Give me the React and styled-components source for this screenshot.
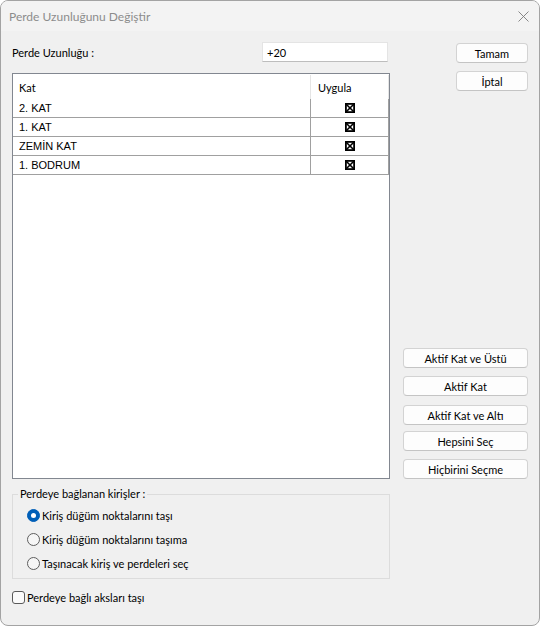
import React from 'react';
import styled, { createGlobalStyle } from 'styled-components';

const GlobalStyle = createGlobalStyle`
	html, body {
		margin: 0;
		padding: 0;
		background: #ffffff;
	}
	body {
		font-family: Lato, "Noto Sans", sans-serif;
		font-size: 11px;
		color: #000;
	}
`;

const Window = styled.div`
	width: 540px;
	height: 626px;
	box-sizing: border-box;
	border: 1px solid #a3a3a3;
	border-radius: 8px;
	overflow: hidden;
	background: #f0f0f0;
	display: flex;
	flex-direction: column;
`;

const TitleBar = styled.div`
	height: 30px;
	flex: none;
	background: #f3f3f3;
	display: flex;
	align-items: center;
	justify-content: space-between;
	padding: 0 10px 0 8px;
`;

const Title = styled.span`
	color: #8c8c8c;
	font-size: 12px;
`;

const Body = styled.div`
	padding: 11px 11px 0 11px;
	display: grid;
	grid-template-columns: 378px 125px;
	column-gap: 13px;
	align-items: stretch;
`;

const LeftCol = styled.div`
	display: flex;
	flex-direction: column;
`;

const RightCol = styled.div`
	display: flex;
	flex-direction: column;
`;

const FieldRow = styled.div`
	height: 20px;
	display: flex;
	align-items: center;
`;

const TextBox = styled.div`
	margin-left: auto;
	margin-right: 2px;
	width: 126px;
	height: 20px;
	box-sizing: border-box;
	background: #fff;
	border: 1px solid #e4e4e4;
	border-bottom-color: #bdbdbd;
	padding-left: 4px;
	display: flex;
	align-items: center;
`;

const Button = styled.div`
	width: ${props => props.narrow ? '72px' : '100%'};
	align-self: flex-end;
	height: 20px;
	box-sizing: border-box;
	margin-top: ${props => props.gap || '0'};
	background: #fdfdfd;
	border: 1px solid #d3d3d3;
	border-bottom-color: #c4c4c4;
	border-radius: 4px;
	display: flex;
	align-items: center;
	justify-content: center;
	line-height: 1;
`;

const Spacer = styled.div`
	flex: 1;
`;

const Grid = styled.div`
	margin-top: 11px;
	height: 406px;
	box-sizing: border-box;
	border: 1px solid #828790;
	background: #fff;
`;

const HeaderRow = styled.div`
	display: grid;
	grid-template-columns: 298px 78px;
	height: 25px;
`;

const HeaderCell = styled.div`
	display: flex;
	align-items: center;
	padding-left: ${props => props.pad || '6px'};
	border-right: 1px solid #e5e5e5;
	margin-top: 1px;
`;

const Row = styled.div`
	display: grid;
	grid-template-columns: 298px 78px;
	height: 19px;
	box-sizing: border-box;
	border-bottom: 1px solid #a0a0a0;
`;

const Cell = styled.div`
	display: flex;
	align-items: center;
	justify-content: ${props => props.center ? 'center' : 'flex-start'};
	padding-left: ${props => props.center ? '0' : '6px'};
	border-right: 1px solid #a0a0a0;
	font-family: "Liberation Sans", Arial, sans-serif;
	font-size: 11px;
`;

const Group = styled.fieldset`
	grid-column: 1;
	margin: 7px 0 0 0;
	padding: 0;
	border: 1px solid #dcdcdc;
	min-width: 0;
`;

const Legend = styled.legend`
	margin-left: 5px;
	padding: 0 2px;
	line-height: 16px;
`;

const OptionList = styled.div`
	display: flex;
	flex-direction: column;
	padding: 1px 0 3px 14px;
`;

const Option = styled.div`
	height: 24px;
	display: flex;
	align-items: center;
	gap: 2px;
`;

const RadioMark = styled.span`
	width: 13px;
	height: 13px;
	box-sizing: border-box;
	border-radius: 50%;
	flex: none;
	display: flex;
	align-items: center;
	justify-content: center;
	background: ${props => props.checked ? '#005fb8' : '#f6f6f6'};
	border: 1px solid ${props => props.checked ? '#005fb8' : '#5e5e5e'};

	&::after {
		content: '';
		display: ${props => props.checked ? 'block' : 'none'};
		width: 5px;
		height: 5px;
		border-radius: 50%;
		background: #fff;
	}
`;

const CheckRow = styled.div`
	grid-column: 1;
	margin-top: 10px;
	height: 16px;
	display: flex;
	align-items: center;
	gap: 2px;
`;

const CheckMark = styled.span`
	width: 13px;
	height: 13px;
	box-sizing: border-box;
	flex: none;
	border: 1px solid #5a5a5a;
	border-radius: 3px;
	background: #fbfbfb;
`;

const CloseIcon = () => (
	<svg width="11" height="11" viewBox="0 0 11 11">
		<path d="M0.5 0.5 L10.5 10.5 M10.5 0.5 L0.5 10.5" stroke="#7a7a7a" strokeWidth="0.9" fill="none" />
	</svg>
);

const CrossBox = () => (
	<svg width="10" height="10" viewBox="0 0 10 10">
		<rect x="0.9" y="0.9" width="8.2" height="8.2" stroke="#000" strokeWidth="1.8" fill="none" />
		<path d="M1.2 1.2 L8.8 8.8 M8.8 1.2 L1.2 8.8" stroke="#000" strokeWidth="1.6" />
	</svg>
);

const floors = ['2. KAT', '1. KAT', 'ZEMİN KAT', '1. BODRUM'];

const options = [
	{label: 'Kiriş düğüm noktalarını taşı', checked: true},
	{label: 'Kiriş düğüm noktalarını taşıma', checked: false},
	{label: 'Taşınacak kiriş ve perdeleri seç', checked: false}
];

export default function App() {
	return (
		<>
			<GlobalStyle />
			<Window>
				<TitleBar>
					<Title>Perde Uzunluğunu Değiştir</Title>
					<CloseIcon />
				</TitleBar>
				<Body>
					<LeftCol>
						<FieldRow>
							<span>Perde Uzunluğu :</span>
							<TextBox>+20</TextBox>
						</FieldRow>
						<Grid>
							<HeaderRow>
								<HeaderCell>Kat</HeaderCell>
								<HeaderCell pad="7px">Uygula</HeaderCell>
							</HeaderRow>
							{floors.map(floor => (
								<Row key={floor}>
									<Cell>{floor}</Cell>
									<Cell center><CrossBox /></Cell>
								</Row>
							))}
						</Grid>
					</LeftCol>
					<RightCol>
						<Button narrow gap="1px">Tamam</Button>
						<Button narrow gap="8px">İptal</Button>
						<Spacer />
						<Button>Aktif Kat ve Üstü</Button>
						<Button gap="8px">Aktif Kat</Button>
						<Button gap="9px">Aktif Kat ve Altı</Button>
						<Button gap="6px">Hepsini Seç</Button>
						<Button gap="8px">Hiçbirini Seçme</Button>
					</RightCol>
					<Group>
						<Legend>Perdeye bağlanan kirişler :</Legend>
						<OptionList>
							{options.map(opt => (
								<Option key={opt.label}>
									<RadioMark checked={opt.checked} />
									<span>{opt.label}</span>
								</Option>
							))}
						</OptionList>
					</Group>
					<CheckRow>
						<CheckMark />
						<span>Perdeye bağlı aksları taşı</span>
					</CheckRow>
				</Body>
			</Window>
		</>
	);
}
